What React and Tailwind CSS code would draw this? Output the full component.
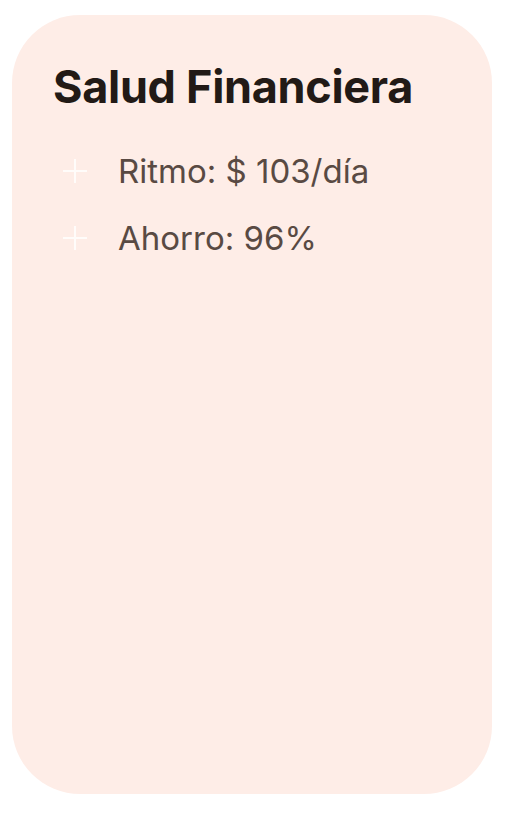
import React from 'react';

const stats = [
  { label: 'Ritmo: $ 103/día' },
  { label: 'Ahorro: 96%' },
];

function PlusIcon() {
  return (
    <svg width="26" height="26" viewBox="0 0 26 26" fill="none" className="shrink-0">
      <path d="M13 1v24M1 13h24" stroke="#ffffff" strokeOpacity="0.8" strokeWidth="2" />
    </svg>
  );
}

export default function App() {
  return (
    <div className="min-h-screen bg-white pt-[15px] pl-3" style={{ fontFamily: 'Inter, "Noto Sans", sans-serif' }}>
      <div className="w-[480px] h-[779px] rounded-[68px] bg-[#feede7] pt-[45px] pl-[41px]">
        <h2 className="text-[45px] leading-[54px] font-bold text-[#221a16] tracking-[-0.3px]">
          Salud Financiera
        </h2>

        {/* Stats list */}
        <ul className="mt-[39px] flex flex-col gap-[31px]">
          {stats.map((s) => (
            <li key={s.label} className="flex items-center h-9">
              <span className="ml-[9px] mr-[30px] flex">
                <PlusIcon />
              </span>
              <span className="text-[33px] leading-none text-[#594a43]">{s.label}</span>
            </li>
          ))}
        </ul>
      </div>
    </div>
  );
}
